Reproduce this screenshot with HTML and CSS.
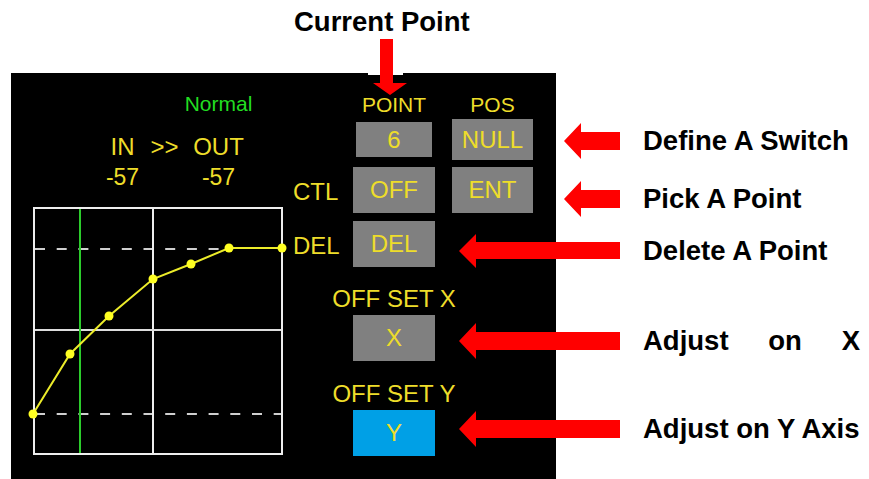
FILE: index.html
```html
<!DOCTYPE html>
<html lang="en">

<head>
    <meta charset="UTF-8">
    <title>Curve Edit</title>
    <link rel="stylesheet" href="styles.css">
</head>

<body>

    <div class="top-note">
        <div class="note-title">Current Point</div>
        <svg class="arrow-down" width="40" height="57" viewBox="368 39 40 57">
            <rect x="368" y="73" width="35" height="2" fill="#fff" />
            <polygon points="380,39 393,39 393,83 407,83 390,95 373,83 380,83" fill="#ff0000" />
        </svg>
    </div>

    <div class="figure">
        <div class="screen">
            <div class="scope">
                <div class="readout">
                    <span class="mode">Normal</span>
                    <span>IN</span>
                    <span>&gt;&gt;</span>
                    <span>OUT</span>
                    <span class="val">-57</span>
                    <span></span>
                    <span class="val">-57</span>
                </div>

                <svg class="curve" width="266" height="262" viewBox="24 200 266 262">
                    <line x1="35" y1="249" x2="229" y2="249" stroke="#cfcfcf" stroke-width="2" stroke-dasharray="10 11.7" />
                    <line x1="35" y1="414" x2="281" y2="414" stroke="#cfcfcf" stroke-width="2" stroke-dasharray="10 11.7" />
                    <rect x="34" y="208" width="248" height="246" fill="none" stroke="#eeeeee" stroke-width="2" />
                    <line x1="153" y1="208" x2="153" y2="454" stroke="#eeeeee" stroke-width="2" />
                    <line x1="35" y1="330" x2="281" y2="330" stroke="#dddddd" stroke-width="2" />
                    <line x1="80" y1="209" x2="80" y2="453" stroke="#2ccc2c" stroke-width="2" />
                    <polyline points="33,414 70,354 109,316 153,279 191,264 229,248 282,248" fill="none" stroke="#ecec2a" stroke-width="2" />
                    <g fill="#ffff22">
                        <circle cx="33" cy="414" r="4.5" />
                        <circle cx="70" cy="354" r="4.5" />
                        <circle cx="109" cy="316" r="4.5" />
                        <circle cx="153" cy="279" r="4.5" />
                        <circle cx="191" cy="264" r="4.5" />
                        <circle cx="229" cy="248" r="4.5" />
                        <circle cx="282" cy="248" r="4.5" />
                    </g>
                </svg>
            </div>

            <div class="controls">
                <div class="ctl-row head">
                    <span></span>
                    <span>POINT</span>
                    <span>POS</span>
                </div>
                <div class="ctl-row first">
                    <span></span>
                    <div class="key small">6</div>
                    <div class="key">NULL</div>
                </div>
                <div class="ctl-row second">
                    <span class="lbl">CTL</span>
                    <div class="key">OFF</div>
                    <div class="key">ENT</div>
                </div>
                <div class="ctl-row third">
                    <span class="lbl">DEL</span>
                    <div class="key">DEL</div>
                </div>
                <div class="ctl-row caption cap-x">
                    <span></span>
                    <div class="cap-text">OFF SET X</div>
                </div>
                <div class="ctl-row after-cap">
                    <span></span>
                    <div class="key">X</div>
                </div>
                <div class="ctl-row caption cap-y">
                    <span></span>
                    <div class="cap-text">OFF SET Y</div>
                </div>
                <div class="ctl-row after-cap">
                    <span></span>
                    <div class="key active">Y</div>
                </div>
            </div>
        </div>

        <div class="notes">
            <div class="note n1">
                <div class="arrow-slot">
                    <svg width="56" height="36" viewBox="0 0 56 36">
                        <polygon points="0,18 17,0 17,9 56,9 56,27 17,27 17,36" fill="#ff0000" />
                    </svg>
                </div>
                <span class="note-text">Define A Switch</span>
            </div>
            <div class="note n2">
                <div class="arrow-slot">
                    <svg width="56" height="36" viewBox="0 0 56 36">
                        <polygon points="0,18 17,0 17,9 56,9 56,27 17,27 17,36" fill="#ff0000" />
                    </svg>
                </div>
                <span class="note-text">Pick A Point</span>
            </div>
            <div class="note n3">
                <div class="arrow-slot">
                    <svg width="161" height="36" viewBox="0 0 161 36">
                        <polygon points="0,18 17,1 17,9 161,9 161,26 17,26 17,35" fill="#ff0000" />
                    </svg>
                </div>
                <span class="note-text">Delete A Point</span>
            </div>
            <div class="note n4">
                <div class="arrow-slot">
                    <svg width="161" height="36" viewBox="0 0 161 36">
                        <polygon points="0,18 17,0 17,9 161,9 161,27 17,27 17,36" fill="#ff0000" />
                    </svg>
                </div>
                <span class="note-text spread"><span>Adjust</span><span>on</span><span>X</span></span>
            </div>
            <div class="note n5">
                <div class="arrow-slot">
                    <svg width="161" height="36" viewBox="0 0 161 36">
                        <polygon points="0,18 17,0 17,9 161,9 161,27 17,27 17,36" fill="#ff0000" />
                    </svg>
                </div>
                <span class="note-text">Adjust on Y Axis</span>
            </div>
        </div>
    </div>

</body>

</html>
```

FILE: styles.css
```css
* {
    box-sizing: border-box;
}

html,
body {
    overflow: hidden;
}

body {
    margin: 0;
    background: #fff;
    font-family: 'Liberation Sans', Arial, sans-serif;
    color: #000;
}

/* caption above the screen */
.top-note {
    height: 73px;
    padding: 6px 0 0 294px;
}

.note-title {
    font-size: 27.5px;
    font-weight: bold;
    line-height: 32px;
    white-space: nowrap;
}

/* the arrow runs down onto the screen, so keep it above it */
.arrow-down {
    display: block;
    position: relative;
    z-index: 1;
    margin: 1px 0 0 74px;
}

.figure {
    display: flex;
    align-items: flex-start;
}

/* the black transmitter screen */
.screen {
    flex-shrink: 0;
    display: flex;
    width: 545px;
    height: 406px;
    margin-left: 11px;
    background: #000;
    color: #eedd2a;
}

.scope {
    width: 282px;
    flex-shrink: 0;
}

.readout {
    display: grid;
    grid-template-columns: 45px 39px 69px;
    grid-template-rows: 40px 30px 30px;
    margin-left: 89px;
    padding-top: 19px;
    text-align: center;
    font-size: 24px;
    line-height: 30px;
    white-space: nowrap;
}

.readout .mode {
    grid-column: 3;
    align-self: start;
    font-size: 21px;
    line-height: 24px;
    color: #22dd22;
}

.readout .val {
    font-size: 23px;
}

.curve {
    display: block;
    margin: 8px 0 0 13px;
}

.controls {
    padding-top: 20px;
}

.ctl-row {
    display: grid;
    grid-template-columns: 43px 82px 81px;
    column-gap: 17px;
    align-items: center;
    white-space: nowrap;
}

.head {
    font-size: 21px;
    line-height: 24px;
    text-align: center;
}

.first {
    margin-top: 2px;
}

.second {
    margin-top: 7px;
}

.third {
    margin-top: 8px;
}

.key {
    display: flex;
    align-items: center;
    justify-content: center;
    height: 46px;
    background: #808080;
    font-size: 24px;
}

.first .key {
    height: 41px;
}

.first .key.small {
    width: 76px;
    height: 35px;
    justify-self: center;
}

.key.active {
    background: #00a0e6;
}

.lbl {
    font-size: 24px;
    line-height: 43px;
    padding-top: 3px;
}

.caption {
    font-size: 24px;
    line-height: 28px;
}

.cap-x {
    margin-top: 18px;
}

.cap-y {
    margin-top: 19px;
}

.after-cap {
    margin-top: 2px;
}

.cap-text {
    display: flex;
    justify-content: center;
}

/* arrows and captions on the right */
.notes {
    display: flex;
    flex-direction: column;
    margin-left: -97px;
    padding-top: 50px;
}

.note {
    display: flex;
    align-items: center;
    height: 36px;
}

.n2 {
    margin-top: 22px;
}

.n3 {
    margin-top: 16px;
}

.n4 {
    margin-top: 54px;
}

.n5 {
    margin-top: 52px;
}

.arrow-slot {
    display: flex;
    justify-content: flex-end;
    width: 161px;
}

.arrow-slot svg {
    display: block;
}

.note-text {
    width: 217px;
    margin-left: 23px;
    font-size: 27.5px;
    font-weight: bold;
    line-height: 32px;
    white-space: nowrap;
}

.note-text.spread {
    display: flex;
    justify-content: space-between;
}
```
